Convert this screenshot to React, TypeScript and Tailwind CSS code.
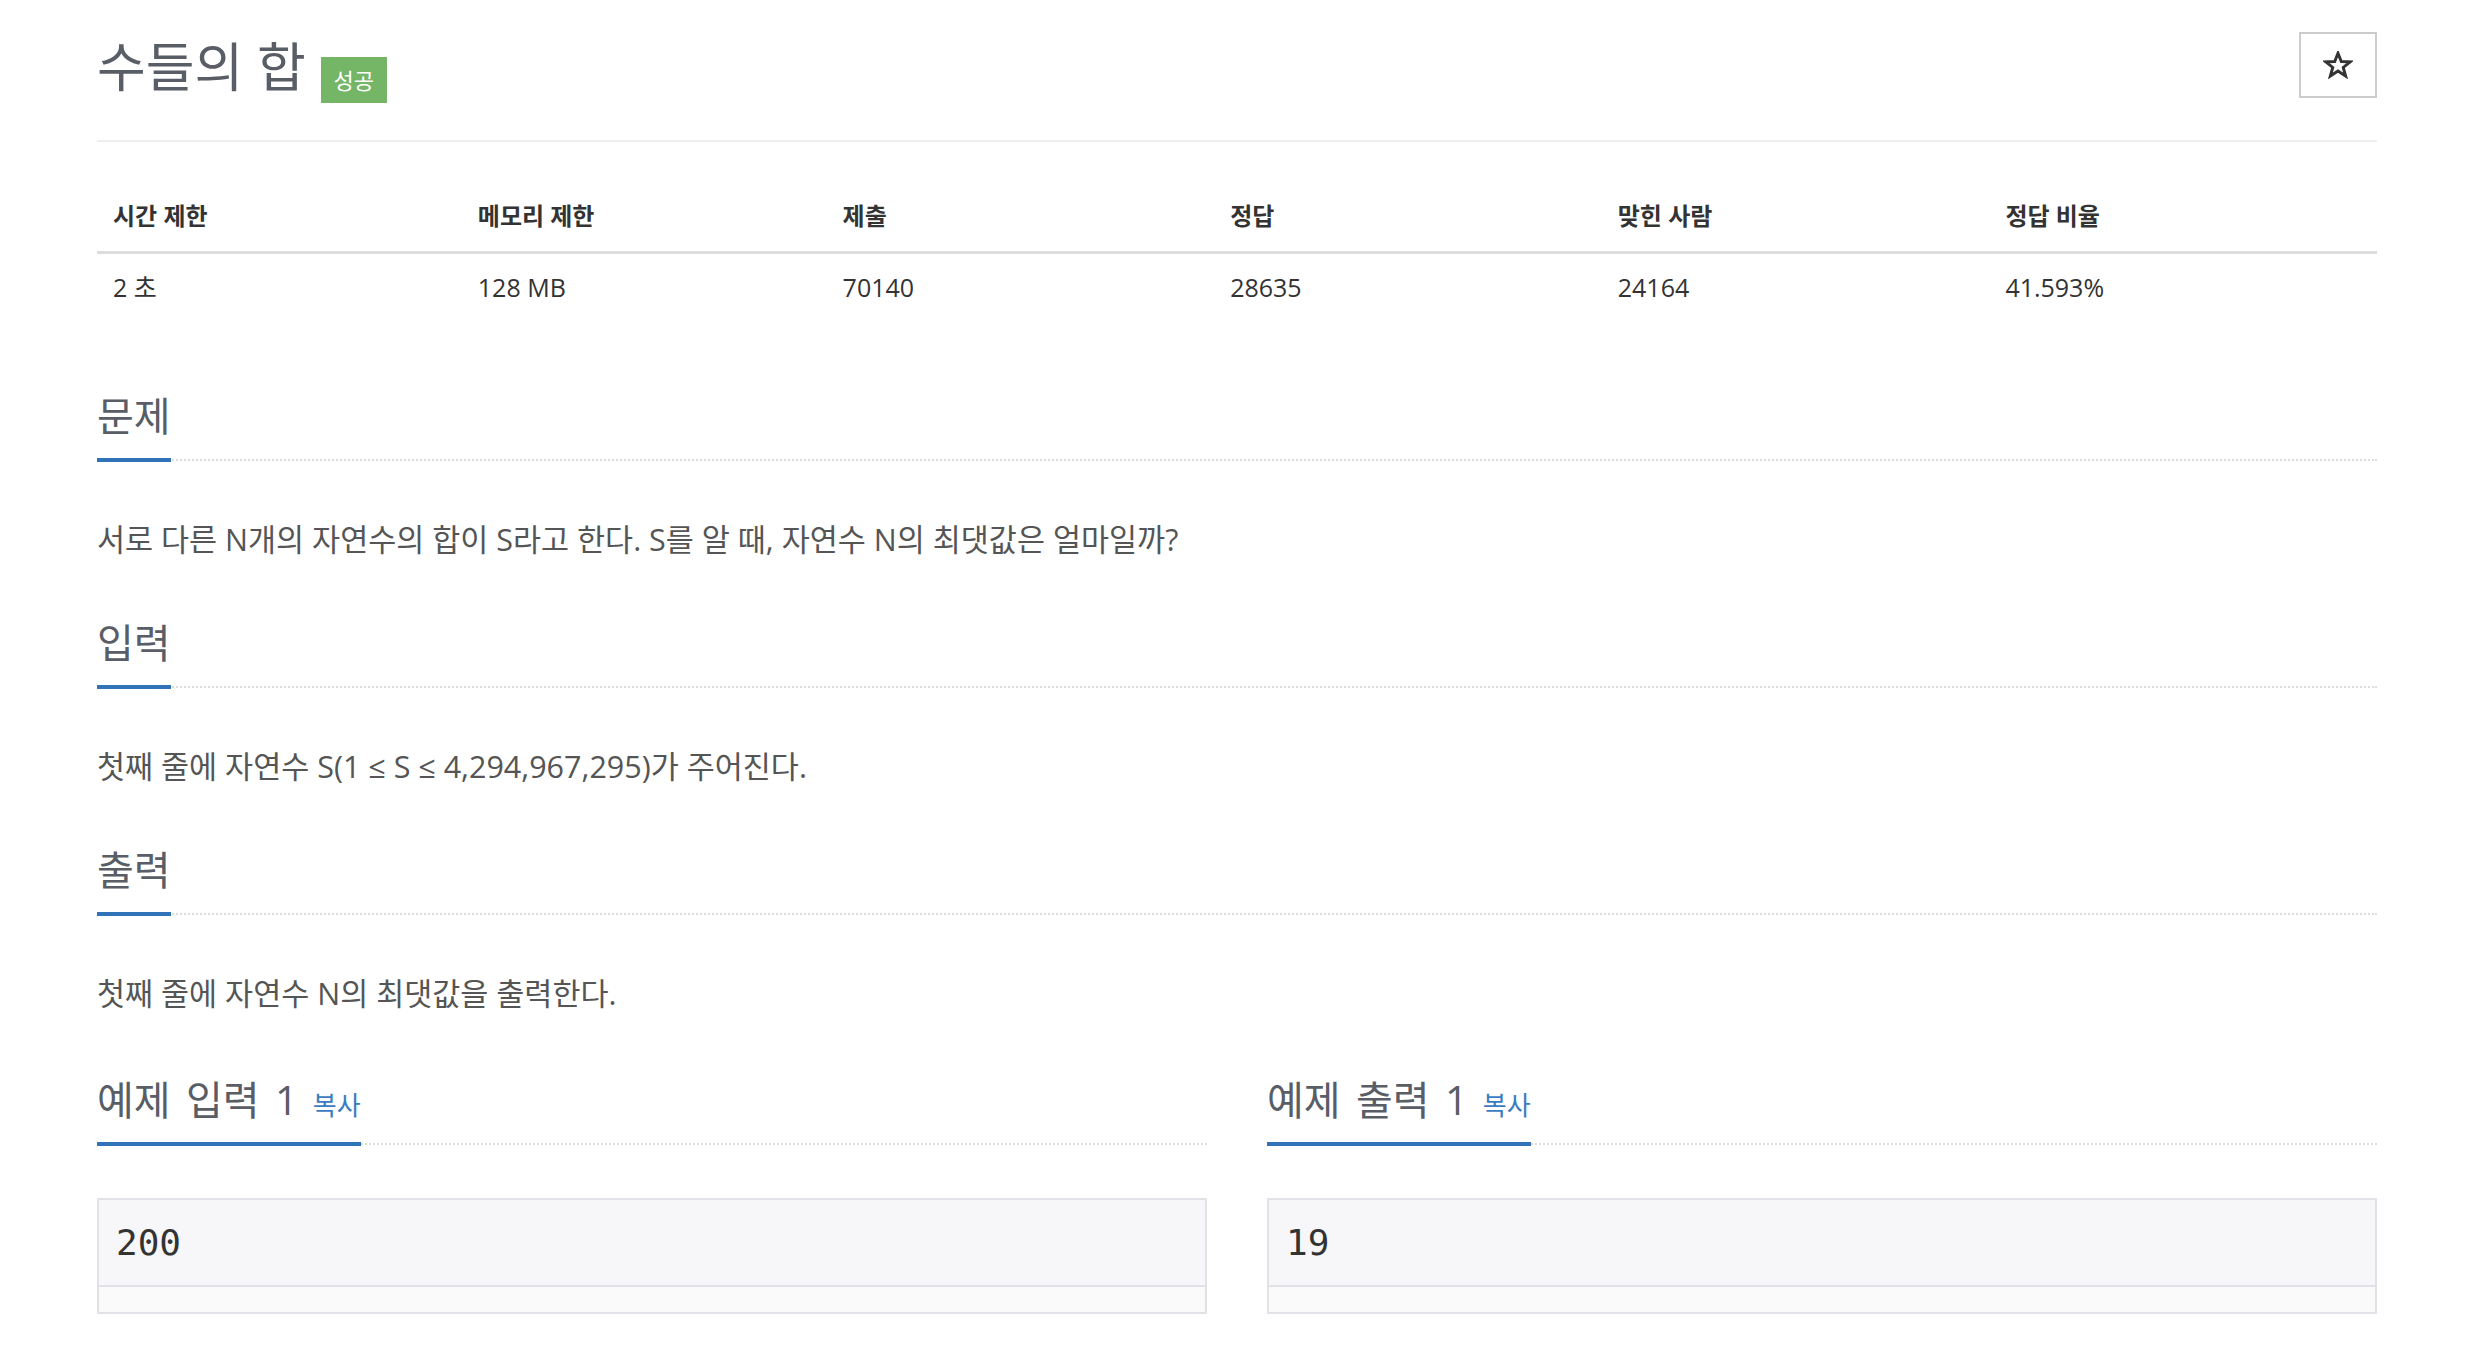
import React from 'react';

const FONT = "font-['Open_Sans','Noto_Sans_CJK_KR',sans-serif]";

const stats = [
  { label: '시간 제한', value: '2 초', w: 'w-[16%]' },
  { label: '메모리 제한', value: '128 MB', w: 'w-[16%]' },
  { label: '제출', value: '70140', w: 'w-[17%]' },
  { label: '정답', value: '28635', w: 'w-[17%]' },
  { label: '맞힌 사람', value: '24164', w: 'w-[17%]' },
  { label: '정답 비율', value: '41.593%', w: 'w-[17%]' },
];

const Headline: React.FC<{ title: string; copy?: boolean }> = ({ title, copy }) => (
  <div className="border-b-2 border-dotted border-[#dcdcdc]">
    <h2
      className={`inline-block -mb-[3px] border-b-4 border-[#3173b8] pb-[18px] text-[40px] leading-[48px] font-normal text-[#585d66] ${
        copy ? '[word-spacing:5px]' : ''
      }`}
    >
      {title}
      {copy && (
        <a className="ml-[15px] cursor-pointer text-[26px] leading-none text-[#3a7cc1] [word-spacing:0px]">복사</a>
      )}
    </h2>
  </div>
);

const Sample: React.FC<{ title: string; data: string }> = ({ title, data }) => (
  <div>
    <Headline title={title} copy />
    <div className="mt-[53px] border-2 border-[#e1e1e8] bg-[#f7f7f9]">
      <div className="flex h-[85px] items-center px-[17px] font-['DejaVu_Sans_Mono',monospace] text-[36px] text-[#333]">
        {data}
      </div>
      <div className="h-[27px] border-t-2 border-[#e1e1e8] bg-[#fafafa]" />
    </div>
  </div>
);

const Section: React.FC<{ title: string; text: string; className: string }> = ({ title, text, className }) => (
  <section className={className}>
    <Headline title={title} />
    <p className="mt-[55px] text-[30.5px] leading-[46px] text-[#555]">{text}</p>
  </section>
);

export default function App() {
  return (
    <div className={`min-h-screen bg-white ${FONT}`}>
      <div className="ml-[97px] w-[2280px] pb-[40px]">
        {/* Title */}
        <div className="flex items-start justify-between border-b-2 border-[#eee] pt-[32px] pb-[37px]">
          <div className="flex items-start">
            <h1 className="mt-[2px] text-[53px] leading-[66px] font-normal text-[#585d66]">수들의 합</h1>
            <span className="ml-[15px] mt-[25px] flex h-[46px] w-[66px] items-center justify-center bg-[#74b566] text-[22px] text-white">
              성공
            </span>
          </div>
          <button className="flex h-[66px] w-[78px] items-center justify-center border-2 border-[#ccc] bg-white">
            <svg width="30" height="28" viewBox="0 0 24 23" fill="none" stroke="#333" strokeWidth="2.4" strokeLinejoin="miter">
              <polygon points="12,1.8 14.7,8.6 22,8.9 16.3,13.5 18.3,20.6 12,16.5 5.7,20.6 7.7,13.5 2,8.9 9.3,8.6" />
            </svg>
          </button>
        </div>

        {/* Stats table */}
        <table className="mt-[39px] w-full border-collapse text-[#333]">
          <thead>
            <tr className="border-b-[3px] border-[#ddd]">
              {stats.map((s) => (
                <th key={s.label} className={`${s.w} px-4 pt-[18px] pb-[18px] text-left text-[24px] font-bold leading-[34px]`}>
                  {s.label}
                </th>
              ))}
            </tr>
          </thead>
          <tbody>
            <tr>
              {stats.map((s) => (
                <td key={s.label} className="px-4 pt-[16px] pb-[16px] text-[25px] leading-[34px]">
                  {s.value}
                </td>
              ))}
            </tr>
          </tbody>
        </table>

        <Section
          className="mt-[72px]"
          title="문제"
          text="서로 다른 N개의 자연수의 합이 S라고 한다. S를 알 때, 자연수 N의 최댓값은 얼마일까?"
        />
        <Section className="mt-[57px]" title="입력" text="첫째 줄에 자연수 S(1 ≤ S ≤ 4,294,967,295)가 주어진다." />
        <Section className="mt-[57px]" title="출력" text="첫째 줄에 자연수 N의 최댓값을 출력한다." />

        {/* Samples */}
        <div className="mt-[60px] grid grid-cols-2 gap-x-[60px]">
          <Sample title="예제 입력 1" data="200" />
          <Sample title="예제 출력 1" data="19" />
        </div>
      </div>
    </div>
  );
}
